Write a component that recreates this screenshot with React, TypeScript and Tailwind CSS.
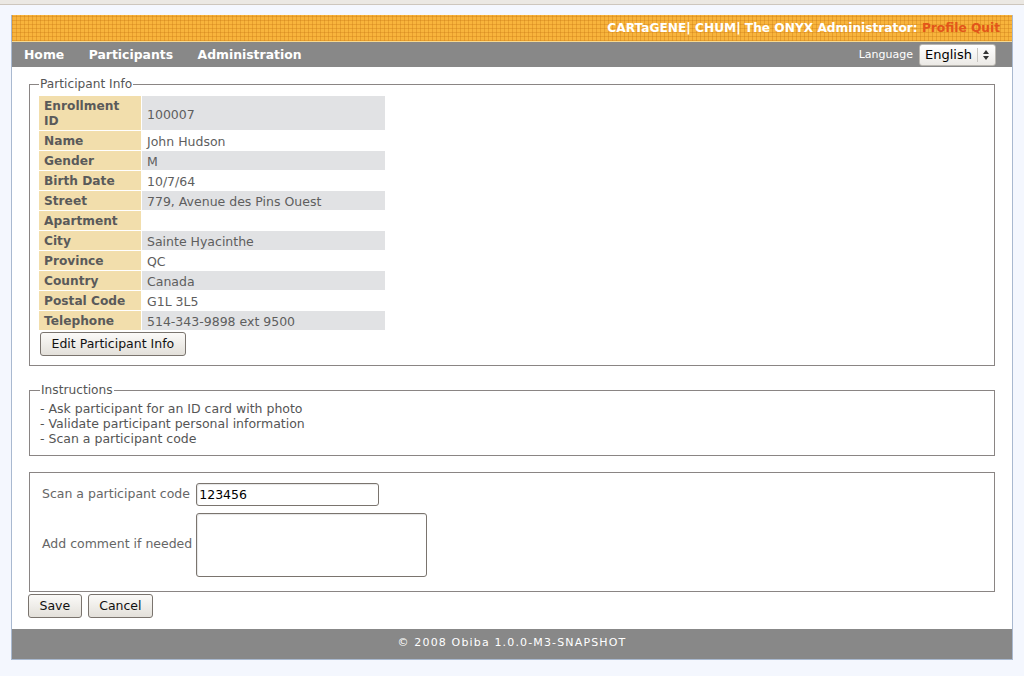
import React from "react";

const participant: [string, string][] = [
  ["Enrollment ID", "100007"],
  ["Name", "John Hudson"],
  ["Gender", "M"],
  ["Birth Date", "10/7/64"],
  ["Street", "779, Avenue des Pins Ouest"],
  ["Apartment", ""],
  ["City", "Sainte Hyacinthe"],
  ["Province", "QC"],
  ["Country", "Canada"],
  ["Postal Code", "G1L 3L5"],
  ["Telephone", "514-343-9898 ext 9500"],
];

const instructions = [
  "- Ask participant for an ID card with photo",
  "- Validate participant personal information",
  "- Scan a participant code",
];

const Button = ({ children }: { children: React.ReactNode }) => (
  <button className="h-[24px] px-[10.5px] rounded-[3px] border border-[#7a746e] bg-[linear-gradient(#fbfaf8,#e3e0da)] text-[12.5px] leading-[15px] text-[#111]">
    {children}
  </button>
);

const App = () => {
  return (
    <div className="min-h-[676px] bg-[#f4f7fe] font-['DejaVu_Sans',_'Liberation_Sans',_sans-serif]">
      <div className="h-[5px] bg-[#ebe8e3] border-b border-[#cdc6bd]" />
      <div className="mt-[10px] ml-[11px] w-[1002px] border-x border-b border-[#a9b9d0] bg-white">
        {/* orange top band */}
        <div className="h-[27px] flex items-center justify-end pr-[12px] border-b border-[#f7d98f] bg-[#f8b43c] bg-[repeating-linear-gradient(90deg,rgba(200,120,20,0.35)_0_1px,transparent_1px_4px),repeating-linear-gradient(0deg,rgba(200,120,20,0.35)_0_1px,transparent_1px_4px)]">
          <span className="text-[12.2px] font-bold text-white">
            CARTaGENE| CHUM| The ONYX Administrator:{" "}
            <span className="text-[#e2561a]">Profile Quit</span>
          </span>
        </div>
        {/* nav bar */}
        <div className="h-[25px] bg-[#888888] flex items-center pl-[12px] pr-[16px]">
          <nav className="pt-[1px] flex gap-[24.5px] text-[12.4px] font-bold text-white">
            <span>Home</span>
            <span>Participants</span>
            <span>Administration</span>
          </nav>
          <div className="ml-auto flex items-center gap-[6px]">
            <span className="pt-[1px] text-[11px] text-white">Language</span>
            <div className="h-[22px] w-[77px] flex items-center rounded-[3px] border border-[#b9b6b0] bg-[linear-gradient(#ffffff,#ebe9e5)] text-[13px] text-black">
              <span className="pl-[5px] flex-1">English</span>
              <span className="h-[14px] border-l border-[#c8c5c0]" />
              <svg width="16" height="14" viewBox="0 0 16 14" className="mr-[1px]">
                <path d="M8 2 L11 6 L5 6 Z" fill="#333" />
                <path d="M8 12 L11 8 L5 8 Z" fill="#333" />
              </svg>
            </div>
          </div>
        </div>

        <div className="px-[17px] pt-[10px] pb-[11px]">
          {/* participant info */}
          <fieldset className="border border-[#8a8584] px-[9px] pb-[9px]">
            <legend className="px-[1px] text-[12.2px] leading-[15px] text-[#555]">Participant Info</legend>
            <div className="mt-[4px] grid grid-cols-[102px_243px] gap-y-[1px] gap-x-[1px] w-[346px]">
              {participant.map(([label, value], i) => (
                <React.Fragment key={label}>
                  <div className="bg-[#f2deac] px-[5px] pt-[3px] pb-[1px] text-[12.2px] leading-[15px] font-bold text-[#5a5a5a]">
                    {label === "Enrollment ID" ? (
                      <>
                        Enrollment
                        <br />
                        ID
                      </>
                    ) : (
                      label
                    )}
                  </div>
                  <div
                    className={`flex items-center px-[5px] pt-[3px] pb-[1px] text-[12.5px] leading-[15px] text-[#5e5e5e] ${
                      i % 2 === 0 ? "bg-[#e1e2e4]" : "bg-white"
                    }`}
                  >
                    {value}
                  </div>
                </React.Fragment>
              ))}
            </div>
            <div className="mt-[1px] ml-[1px]">
              <Button>Edit Participant Info</Button>
            </div>
          </fieldset>

          {/* instructions */}
          <fieldset className="mt-[17px] border border-[#8a8584] px-[10px] pb-[9px]">
            <legend className="px-[1px] text-[12.2px] leading-[15px] text-[#555]">Instructions</legend>
            <div className="mt-[3px] text-[12.5px] leading-[15px] text-[#555]">
              {instructions.map((line) => (
                <div key={line}>{line}</div>
              ))}
            </div>
          </fieldset>

          {/* scan form */}
          <div className="mt-[16px] border border-[#8a8584] pl-[12px] pt-[10px] pb-[14px]">
            <div className="grid grid-cols-[auto_auto] justify-start items-center gap-x-[4px] gap-y-[7px] text-[12.5px] text-[#666]">
              <span>Scan a participant code</span>
              <input
                type="text"
                defaultValue="123456"
                className="h-[23px] w-[183px] rounded-[3px] border border-[#7a746e] px-[2px] text-[12.5px] text-black shadow-[inset_1px_1px_1px_rgba(0,0,0,0.1)]"
              />
              <span>Add comment if needed</span>
              <textarea className="h-[64px] w-[231px] rounded-[3px] border border-[#7a746e] resize-none shadow-[inset_1px_1px_1px_rgba(0,0,0,0.1)]" />
            </div>
          </div>

          <div className="mt-[2px] -ml-[1px] flex gap-[6px]">
            <Button>Save</Button>
            <Button>Cancel</Button>
          </div>
        </div>

        {/* footer */}
        <div className="h-[30px] bg-[#888888] flex items-center justify-center text-[11px] tracking-[1.15px] text-white">
          © 2008 Obiba 1.0.0-M3-SNAPSHOT
        </div>
      </div>
    </div>
  );
};

export default App;
